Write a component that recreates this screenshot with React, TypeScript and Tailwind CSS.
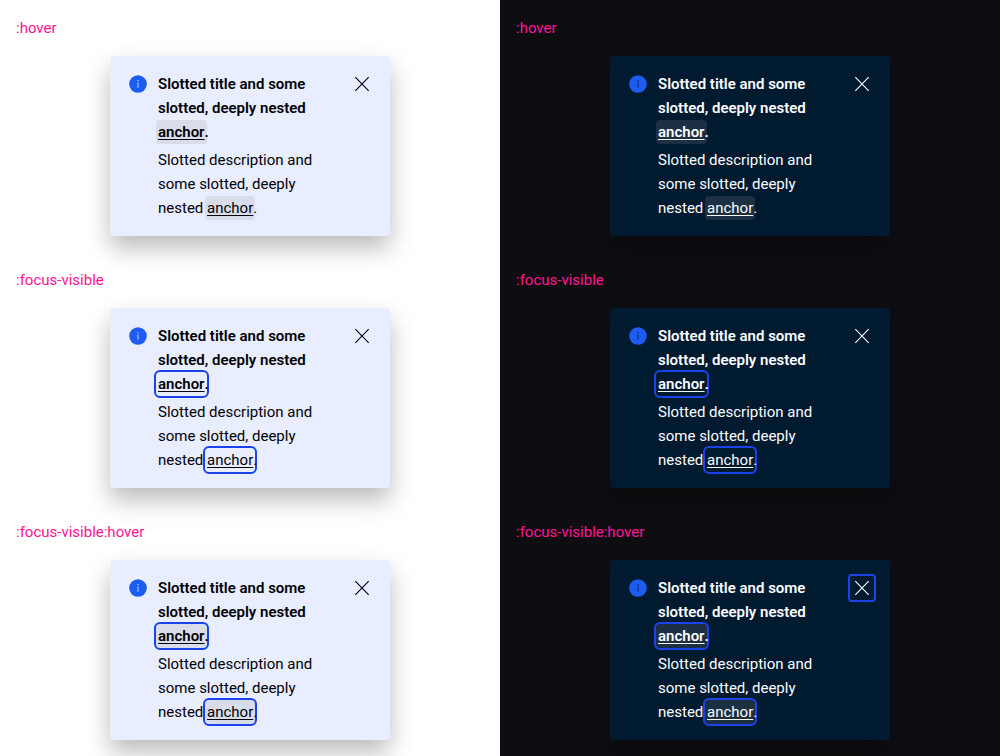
import clsx from 'clsx';

type Theme = 'light' | 'dark';

interface State {
  label: string;
  hover: boolean;
  focus: boolean;
}

const states: State[] = [
  { label: ':hover', hover: true, focus: false },
  { label: ':focus-visible', hover: false, focus: true },
  { label: ':focus-visible:hover', hover: true, focus: true },
];

function InfoIcon({ theme }: { theme: Theme }) {
  return (
    <svg viewBox="0 0 24 24" className="size-6 shrink-0" role="img" aria-label="Information">
      <circle cx="12" cy="12" r="8.8" fill="#1c5cf0" />
      <path
        d="M11.5 10.4h1v5.4h-1zM11.4 8h1.2v1.2h-1.2z"
        fill={theme === 'dark' ? '#001a30' : '#e8edff'}
        fillOpacity="0.8"
      />
    </svg>
  );
}

function Anchor({ theme, hover, focus }: { theme: Theme; hover: boolean; focus: boolean }) {
  return (
    <a
      href="#"
      className={clsx(
        'relative inline-block underline underline-offset-2',
        'before:absolute before:-inset-x-0.5 before:inset-y-0 before:-z-10 before:rounded-sm',
        hover && (theme === 'dark' ? 'before:bg-[#1c2f43]' : 'before:bg-[#d8dde9]'),
        focus && 'before:outline-2 before:outline-[#1a44ea]',
      )}
    >
      anchor
    </a>
  );
}

function Toast({ theme, state, closeFocused }: { theme: Theme; state: State; closeFocused: boolean }) {
  return (
    <div
      role="status"
      className={clsx(
        'isolate flex w-[280px] max-w-full items-start gap-2 rounded-sm p-4 shadow-[0_12px_24px_rgba(0,0,0,0.27)]',
        theme === 'dark' ? 'bg-[#001a30] text-[#fbfcff]' : 'bg-[#e8edff] text-[#010205]',
      )}
    >
      <InfoIcon theme={theme} />
      <div className="min-w-0 flex-1">
        <h5 className="mb-1 font-semibold">
          Slotted title and some slotted, deeply nested{' '}
          <Anchor theme={theme} hover={state.hover} focus={state.focus} />.
        </h5>
        <p>
          Slotted description and some slotted, deeply nested{' '}
          <Anchor theme={theme} hover={state.hover} focus={state.focus} />.
        </p>
      </div>
      <button
        type="button"
        aria-label="Close notification"
        className={clsx('size-6 shrink-0 rounded-xs', closeFocused && 'outline-2 outline-[#1a44ea]')}
      >
        <svg viewBox="0 0 24 24" className="size-6" fill="none" stroke="currentColor" strokeWidth="1.1">
          <path d="M5.3 5.2 18.7 18.8M18.7 5.2 5.3 18.8" />
        </svg>
      </button>
    </div>
  );
}

function Column({ theme }: { theme: Theme }) {
  return (
    <div className={clsx('flex-1', theme === 'dark' ? 'bg-[#0e0e12]' : 'bg-white')}>
      {states.map((state) => (
        <section key={state.label} className="flex flex-col gap-4 p-4">
          <p className="text-[#ff1493]">{state.label}</p>
          <div className="flex justify-center">
            <Toast
              theme={theme}
              state={state}
              closeFocused={theme === 'dark' && state.focus && state.hover}
            />
          </div>
        </section>
      ))}
    </div>
  );
}

export default function App() {
  return (
    <main className="flex min-h-screen font-['Roboto',sans-serif] text-[15px] leading-6">
      <Column theme="light" />
      <Column theme="dark" />
    </main>
  );
}
